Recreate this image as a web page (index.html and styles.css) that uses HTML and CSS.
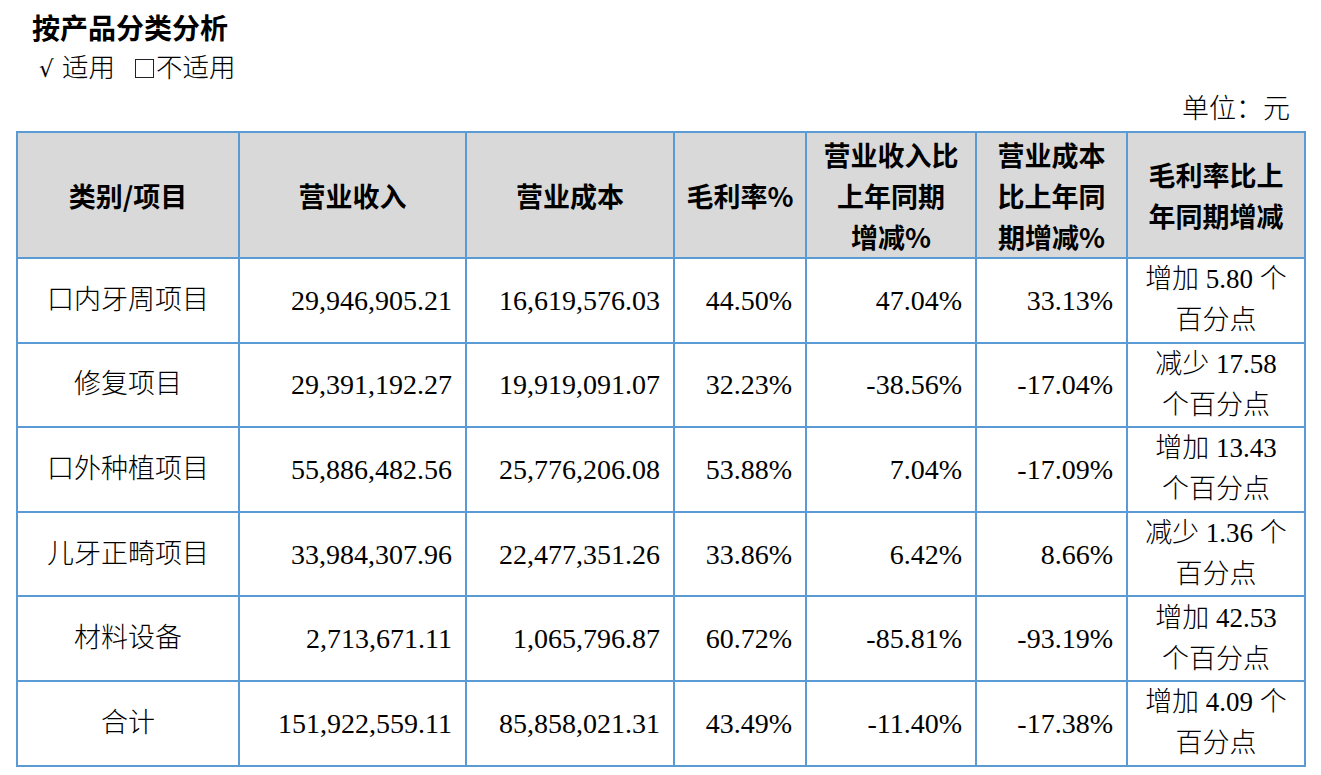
FILE: index.html
```html
<!DOCTYPE html>
<html lang="zh-CN">
<head>
<meta charset="utf-8">
<title>按产品分类分析</title>
<link rel="stylesheet" href="styles.css">
</head>
<body>
<div class="page">
  <div class="title">按产品分类分析</div>
  <div class="applic"><span class="check">√</span><span class="opt">适用</span><span class="box"></span><span>不适用</span></div>
  <div class="unit">单位：元</div>
  <table class="data">
    <colgroup>
      <col class="c1"><col class="c2"><col class="c3"><col class="c4"><col class="c5"><col class="c6"><col class="c7">
    </colgroup>
    <thead>
      <tr class="head">
        <th>类别/项目</th>
        <th>营业收入</th>
        <th>营业成本</th>
        <th>毛利率%</th>
        <th>营业收入比<br>上年同期<br>增减%</th>
        <th>营业成本<br>比上年同<br>期增减%</th>
        <th>毛利率比上<br>年同期增减</th>
      </tr>
    </thead>
    <tbody>
      <tr>
        <td class="name">口内牙周项目</td>
        <td class="num">29,946,905.21</td>
        <td class="num">16,619,576.03</td>
        <td class="num">44.50%</td>
        <td class="num">47.04%</td>
        <td class="num">33.13%</td>
        <td class="chg">增加 5.80 个<br>百分点</td>
      </tr>
      <tr>
        <td class="name">修复项目</td>
        <td class="num">29,391,192.27</td>
        <td class="num">19,919,091.07</td>
        <td class="num">32.23%</td>
        <td class="num">-38.56%</td>
        <td class="num">-17.04%</td>
        <td class="chg">减少 17.58<br>个百分点</td>
      </tr>
      <tr>
        <td class="name">口外种植项目</td>
        <td class="num">55,886,482.56</td>
        <td class="num">25,776,206.08</td>
        <td class="num">53.88%</td>
        <td class="num">7.04%</td>
        <td class="num">-17.09%</td>
        <td class="chg">增加 13.43<br>个百分点</td>
      </tr>
      <tr>
        <td class="name">儿牙正畸项目</td>
        <td class="num">33,984,307.96</td>
        <td class="num">22,477,351.26</td>
        <td class="num">33.86%</td>
        <td class="num">6.42%</td>
        <td class="num">8.66%</td>
        <td class="chg">减少 1.36 个<br>百分点</td>
      </tr>
      <tr>
        <td class="name">材料设备</td>
        <td class="num">2,713,671.11</td>
        <td class="num">1,065,796.87</td>
        <td class="num">60.72%</td>
        <td class="num">-85.81%</td>
        <td class="num">-93.19%</td>
        <td class="chg">增加 42.53<br>个百分点</td>
      </tr>
      <tr>
        <td class="name">合计</td>
        <td class="num">151,922,559.11</td>
        <td class="num">85,858,021.31</td>
        <td class="num">43.49%</td>
        <td class="num">-11.40%</td>
        <td class="num">-17.38%</td>
        <td class="chg">增加 4.09 个<br>百分点</td>
      </tr>
    </tbody>
  </table>
</div>
</body>
</html>
```

FILE: styles.css
```css
html, body {
  margin: 0;
  padding: 0;
  background: #ffffff;
}

body {
  font-family: "Liberation Serif", "Noto Sans CJK SC", serif;
  font-weight: 300;
  color: #000000;
  font-size: 27px;
}

.page {
  padding: 7px 16px 0 16px;
}

.title {
  font-family: "Noto Sans CJK SC", sans-serif;
  font-weight: 700;
  font-size: 28px;
  line-height: 41px;
  height: 41px;
  padding-left: 16px;
}

.applic {
  display: flex;
  align-items: center;
  line-height: 41px;
  height: 41px;
  padding-left: 23px;
  font-size: 26.5px;
}

.check {
  font-family: "DejaVu Sans", sans-serif;
  font-weight: 400;
  font-size: 23px;
  width: 23px;
  padding-top: 2px;
}

.opt {
  margin-right: 20px;
}

.box {
  display: inline-block;
  box-sizing: border-box;
  width: 19px;
  height: 19px;
  border: 1.5px solid #222222;
  margin-right: 2px;
  margin-top: -1px;
}

.unit {
  text-align: right;
  line-height: 41px;
  height: 41px;
  padding-right: 15px;
  font-size: 27px;
}

.data {
  border-collapse: collapse;
  table-layout: fixed;
  width: 1290px;
  margin-top: 1px;
}

.c1 { width: 222px; }
.c2 { width: 227px; }
.c3 { width: 208px; }
.c4 { width: 132px; }
.c5 { width: 170px; }
.c6 { width: 151px; }
.c7 { width: 178px; }

.data th,
.data td {
  border: 2px solid #5b9bd5;
  padding: 0 12px;
  line-height: 41px;
  font-size: 27px;
}

.data th {
  background: #d9d9d9;
  font-family: "Noto Sans CJK SC", sans-serif;
  font-weight: 700;
  text-align: center;
  padding: 0 4px;
}

.head {
  height: 126px;
}

.data tbody tr {
  height: 84.6px;
}

.name {
  text-align: center;
}

.data td.num {
  text-align: right;
  font-size: 28px;
  font-weight: 400;
  padding-right: 13px;
}

.chg {
  text-align: center;
  padding: 0 6px;
}
```
